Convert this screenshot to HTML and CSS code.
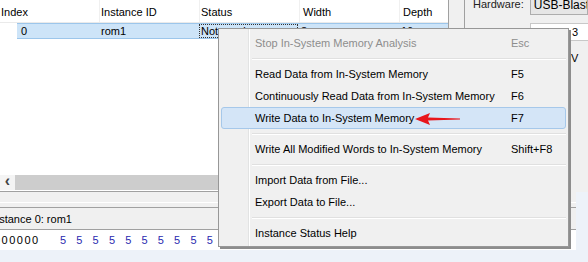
FILE: index.html
```html
<!DOCTYPE html>
<html lang="en">

<head>
    <meta charset="UTF-8">
    <title>In-System Memory Content Editor</title>
    <link rel="stylesheet" href="styles.css">
</head>

<body>
    <div class="app">
        <div class="top">
            <div class="table-pane">
                <div class="thead">
                    <div class="th col-index">Index</div>
                    <div class="th col-id">Instance ID</div>
                    <div class="th col-status">Status</div>
                    <div class="th col-width">Width</div>
                    <div class="th col-depth">Depth</div>
                </div>
                <div class="tbody">
                    <div class="tr selected">
                        <div class="td cell-index">0</div>
                        <div class="td col-id">rom1</div>
                        <div class="td col-status focus">Not running</div>
                        <div class="td col-width">8</div>
                        <div class="td col-depth">16</div>
                    </div>
                </div>
                <div class="hscroll">
                    <div class="arrow-btn">&lsaquo;</div>
                    <div class="track"></div>
                </div>
            </div>
            <div class="splitter"></div>
            <div class="side-pane">
                <div class="hw-row">
                    <span class="hw-label">Hardware:</span>
                    <span class="hw-box">USB-Blaster</span>
                </div>
                <div class="dev-box">3</div>
                <div class="dev-row">V</div>
            </div>
        </div>

        <div class="bottom">
            <div class="strip"></div>
            <div class="instance-title">Instance 0: rom1</div>
            <div class="hex-row">
                <span class="addr">000000</span><span class="hex">5</span><span class="hex">5</span><span class="hex">5</span><span class="hex">5</span><span class="hex">5</span><span class="hex">5</span><span class="hex">5</span><span class="hex">5</span><span class="hex">5</span><span class="hex">5</span>
            </div>
        </div>

        <!-- context menu for the selected instance -->
        <div class="menu">
            <div class="item disabled"><span class="label">Stop In-System Memory Analysis</span><span class="key">Esc</span></div>
            <div class="sep"></div>
            <div class="item"><span class="label">Read Data from In-System Memory</span><span class="key">F5</span></div>
            <div class="item"><span class="label">Continuously Read Data from In-System Memory</span><span class="key">F6</span></div>
            <div class="item hover">
                <span class="label">Write Data to In-System Memory</span><span class="key">F7</span>
                <svg class="red-arrow" width="46" height="14" viewBox="0 0 46 14">
                    <path d="M0 7 L15 1 L13 5.6 L45 6.4 L45 7.6 L13 8.4 L15 13 Z" fill="#e8161c" />
                </svg>
            </div>
            <div class="sep"></div>
            <div class="item"><span class="label">Write All Modified Words to In-System Memory</span><span class="key">Shift+F8</span></div>
            <div class="sep"></div>
            <div class="item"><span class="label">Import Data from File...</span></div>
            <div class="item"><span class="label">Export Data to File...</span></div>
            <div class="sep"></div>
            <div class="item"><span class="label">Instance Status Help</span></div>
        </div>
    </div>
</body>

</html>
```

FILE: styles.css
```css
* {
    box-sizing: border-box;
}

body {
    margin: 0;
    width: 588px;
    height: 262px;
    overflow: hidden;
    background-color: #edf2f9;
    font-family: "Liberation Sans", Arial, sans-serif;
    font-size: 11px;
    color: #000;
}

.app {
    position: relative;
    width: 588px;
    height: 262px;
    display: flex;
    flex-direction: column;
}

.top {
    display: flex;
    height: 192px;
}

/* instance table */
.table-pane {
    flex: 0 0 449px;
    display: flex;
    flex-direction: column;
    background-color: #fff;
    border-right: 1px solid #a0a0a0;
    border-bottom: 1px solid #a0a0a0;
}

.thead {
    display: flex;
    height: 23px;
    border-bottom: 1px solid #eaeaea;
}

.th {
    padding: 6px 0 0 1px;
    border-right: 1px solid #f0f0f0;
}

.col-index {
    width: 100px;
}

.col-id {
    width: 100px;
}

.col-status {
    width: 100px;
}

.col-width {
    width: 100px;
    padding-left: 3px;
}

.col-depth {
    width: 48px;
    border-right: none;
    padding-left: 3px;
}

.tbody {
    flex: 1;
}

.tr {
    display: flex;
    height: 16px;
    margin-left: 17px;
    width: 431px;
}

.tr.selected {
    background-color: #cde4f8;
    border-top: 1px solid #9cc6eb;
    border-bottom: 1px solid #9cc6eb;
}

.td {
    line-height: 14px;
    white-space: nowrap;
    overflow: hidden;
}

.cell-index {
    width: 83px;
    padding-left: 4px;
}

.td.col-id {
    padding-left: 1px;
}

.td.focus {
    margin-left: -1px;
    width: 99px;
    padding-left: 2px;
    outline: 1px dotted #333;
    outline-offset: -1px;
}

.hscroll {
    display: flex;
    height: 15px;
    margin-bottom: 1px;
}

.arrow-btn {
    width: 15px;
    font-size: 16px;
    line-height: 12px;
    text-align: center;
    font-weight: bold;
    color: #444;
    background-color: #f4f4f4;
}

.track {
    flex: 1;
    background-color: #cdcdcd;
}

.splitter {
    flex: 0 0 16px;
    background-color: #f0f0f0;
    border-right: 1px solid #a0a0a0;
}

/* hardware setup panel */
.side-pane {
    flex: 1;
    min-width: 0;
    overflow: hidden;
    background-color: #f0f0f0;
    padding-left: 8px;
}

.hw-row {
    display: flex;
    align-items: center;
    gap: 6px;
    margin-top: -7px;
    height: 22px;
}

.hw-label {
    color: #222;
}

.hw-box {
    flex: 1;
    height: 21px;
    line-height: 20px;
    padding-left: 3px;
    white-space: nowrap;
    overflow: hidden;
    font-size: 12px;
    background-color: #e6e6e6;
    border: 1px solid #adadad;
}

.dev-box {
    margin: 8px 0 0 57px;
    height: 18px;
    padding-left: 41px;
    line-height: 16px;
    border: 1px solid #c8c8c8;
    border-right: none;
    background-color: #fff;
}

.dev-row {
    margin: 10px 0 0 98px;
    line-height: 14px;
}

/* memory editor */
.bottom {
    width: 576px;
    flex: 1;
    display: flex;
    flex-direction: column;
}

.strip {
    height: 16px;
    background-color: #f0f0f0;
    border-top: 10px solid #f0f0f0;
    border-bottom: 1px solid #a0a0a0;
    background-image: linear-gradient(#fff, #fff);
    background-size: 100% 1px;
    background-repeat: no-repeat;
}

.instance-title {
    height: 22px;
    line-height: 22px;
    text-indent: -10px;
    background-color: #f0f0f0;
    border-bottom: 1px solid #a0a0a0;
}

.hex-row {
    height: 20px;
    line-height: 20px;
    background-color: #fff;
    white-space: nowrap;
    text-indent: -3px;
}

.addr {
    display: inline-block;
    width: 63px;
    letter-spacing: 1.5px;
}

.hex {
    display: inline-block;
    width: 16.3px;
    text-indent: 0;
    color: #2a2ab0;
}

/* popup menu */
.menu {
    position: absolute;
    left: 218px;
    top: 28px;
    width: 351px;
    padding: 3px 2px 2px 2px;
    background-color: #f0f0f0;
    background-image: linear-gradient(to right, transparent 29px, #e2e3e3 29px, #e2e3e3 30px, #fff 30px, #fff 31px, transparent 31px);
    border: 1px solid #979797;
    box-shadow: 2px 2px 0 #8d8d8d;
}

.item {
    position: relative;
    display: flex;
    height: 22px;
    line-height: 21px;
    padding-left: 33px;
    border: 1px solid transparent;
    border-radius: 3px;
}

.item.hover {
    background-color: #d4e5f7;
    border-color: #a6c8ea;
}

.item.disabled {
    color: #8d8d8d;
}

.label {
    width: 256px;
    white-space: nowrap;
}

.sep {
    height: 9px;
    margin-left: 31px;
    background-image: linear-gradient(#e0e0e0, #e0e0e0), linear-gradient(#fff, #fff);
    background-size: 100% 1px, 100% 1px;
    background-position: 0 4px, 0 5px;
    background-repeat: no-repeat;
}

.red-arrow {
    position: absolute;
    left: 193px;
    top: 4px;
}
```
